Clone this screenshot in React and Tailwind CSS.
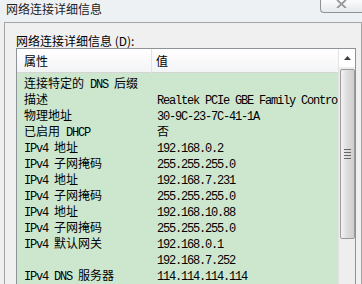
import React from 'react';

const rows = [
  ['连接特定的 DNS 后缀', ''],
  ['描述', 'Realtek PCIe GBE Family Controller'],
  ['物理地址', '30-9C-23-7C-41-1A'],
  ['已启用 DHCP', '否'],
  ['IPv4 地址', '192.168.0.2'],
  ['IPv4 子网掩码', '255.255.255.0'],
  ['IPv4 地址', '192.168.7.231'],
  ['IPv4 子网掩码', '255.255.255.0'],
  ['IPv4 地址', '192.168.10.88'],
  ['IPv4 子网掩码', '255.255.255.0'],
  ['IPv4 默认网关', '192.168.0.1'],
  ['', '192.168.7.252'],
  ['IPv4 DNS 服务器', '114.114.114.114'],
];

// ascii in a narrow mono face, CJK at full width, like SimSun
function Mixed({ text }) {
  return text.split(/([\x20-\x7e]+)/).map((s, i) =>
    /[\x20-\x7e]/.test(s) ? (
      <span key={i} className="font-['Liberation_Mono'] text-[12px] tracking-[-1.2px]">{s}</span>
    ) : (
      <span key={i}>{s}</span>
    )
  );
}

export default function App() {
  return (
    <div className="w-[362px] h-[284px] bg-[#f0f0f0] flex flex-col overflow-hidden font-['Noto_Sans_CJK_SC',sans-serif] text-[12px] text-black">
      {/* Title bar */}
      <div className="h-[22px] flex justify-between items-start bg-[#eef1f4]">
        <span className="pl-[6px] pt-[1px] leading-[16px] text-[#222]">网络连接详细信息</span>
        <div className="w-[42px] h-[13px] border border-t-0 border-r-0 border-[#8f9296] rounded-bl-[4px] bg-gradient-to-b from-[#fafbfc] to-[#e6e9ed] flex justify-center">
          <svg width="11" height="8" viewBox="0 0 11 8">
            <path d="M1 0 L10 8 M10 0 L1 8" stroke="#6b6e72" strokeWidth="1.6" />
            <path d="M1 0 L10 8 M10 0 L1 8" stroke="#fff" strokeWidth="0.4" />
          </svg>
        </div>
      </div>

      {/* Dialog frame */}
      <div className="ml-[4px] w-[358px] flex-1 flex flex-col border border-b-0 border-[#a5a5a5] bg-[#f0f0f0]">
        <div className="pl-[11px] pt-[10px] h-[25px] leading-[16px]">
          网络连接详细信息 (D):
        </div>

        {/* List box */}
        <div className="ml-[11px] w-[340px] flex-1 flex border border-b-0 border-[#8e9299] overflow-hidden">
          <div className="flex-1 flex flex-col bg-[#cde7cf] overflow-hidden">
            <div className="h-[24px] grid grid-cols-[135px_1fr] bg-gradient-to-b from-[#ffffff] to-[#f3f4f6] border-b border-[#d5d5d5]">
              <div className="pl-[7px] leading-[24px] border-r border-[#e0e2e5]">属性</div>
              <div className="pl-[4px] leading-[24px]">值</div>
            </div>
            <div className="pt-[2px]">
              {rows.map((r, i) => (
                <div key={i} className="h-[16px] grid grid-cols-[135px_1fr] leading-[16px] whitespace-nowrap">
                  <div className="pl-[7px]"><Mixed text={r[0]} /></div>
                  <div className="pl-[5px] overflow-hidden"><Mixed text={r[1]} /></div>
                </div>
              ))}
            </div>
          </div>

          {/* Scrollbar */}
          <div className="w-[17px] flex flex-col items-center bg-[#eeeeee] border-l border-[#e3e3e3]">
            <div className="h-[18px] w-full flex items-center justify-center bg-white">
              <svg width="7" height="4" viewBox="0 0 7 4">
                <path d="M0 4 L3.5 0 L7 4 Z" fill="#404040" />
              </svg>
            </div>
            <div className="mt-[2px] w-[15px] h-[170px] rounded-[2px] border border-[#9a9a9a] bg-gradient-to-r from-[#f3f3f3] via-[#dcdcdc] to-[#cfcfcf] flex flex-col items-center justify-center gap-[2px]">
              <div className="w-[7px] h-px bg-[#666]" />
              <div className="w-[7px] h-px bg-[#666]" />
              <div className="w-[7px] h-px bg-[#666]" />
              <div className="w-[7px] h-px bg-[#666]" />
            </div>
          </div>
        </div>
      </div>
    </div>
  );
}
